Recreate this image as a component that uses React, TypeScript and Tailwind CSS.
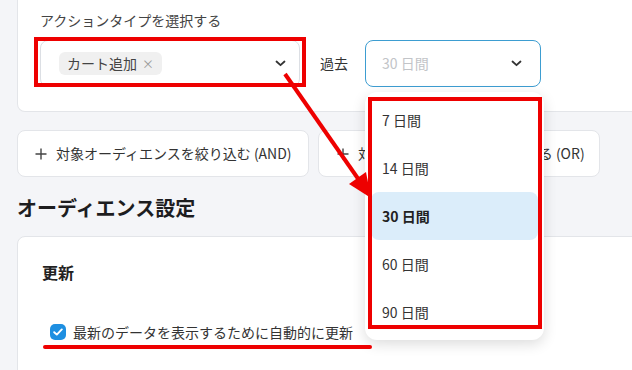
import React from "react";

const font = "font-['Noto_Sans_CJK_JP','Noto_Sans',sans-serif]";

function Chevron({ className = "" }: { className?: string }) {
  return (
    <svg width="11" height="7" viewBox="0 0 11 7" className={className}>
      <path d="M1.5 1.5 L5.5 5.2 L9.5 1.5" fill="none" stroke="#333" strokeWidth="1.8" strokeLinecap="round" strokeLinejoin="round" />
    </svg>
  );
}

function PlusIcon() {
  return (
    <svg width="12" height="12" viewBox="0 0 12 12" className="shrink-0">
      <path d="M6 0.5 V11.5 M0.5 6 H11.5" stroke="#444" strokeWidth="1.4" />
    </svg>
  );
}

const periods = ["7 日間", "14 日間", "30 日間", "60 日間", "90 日間"];

export default function App() {
  return (
    <div className={`relative w-[632px] h-[370px] overflow-hidden bg-[#f4f5f8] text-[#333] ${font}`}>
      <div className="pl-[17px]">
        {/* action type card */}
        <section className="w-[660px] h-[112px] bg-white border border-t-0 border-[#e3e5e9] rounded-bl-lg pl-[22px] pt-[10px]">
          <p className="text-[14px] leading-[20px] text-[#444]">アクションタイプを選択する</p>
          <div className="flex items-center mt-[10px]">
            <div className="w-[260px] h-[47px] border border-[#dcdfe4] rounded-lg flex items-center justify-between pl-[18px] pr-[13px]">
              <span className="flex items-center gap-[5px] bg-[#f0f0f0] rounded-[6px] h-[23px] px-[8px] text-[14px] text-[#444]">
                カート追加
                <span className="text-[12px] text-[#999] leading-none">×</span>
              </span>
              <Chevron />
            </div>
            <span className="ml-[20px] text-[14px] text-[#333]">過去</span>
            <div className="ml-[17px] w-[176px] h-[47px] border border-[#3d9dd1] rounded-lg flex items-center justify-between pl-[16px] pr-[18px]">
              <span className="text-[14px] text-[#c2c4c8]">30 日間</span>
              <Chevron />
            </div>
          </div>
        </section>

        {/* filter buttons */}
        <div className="flex gap-[9px] mt-[18px]">
          <button className="w-[292px] h-[47px] bg-white border border-[#e3e5e9] rounded-lg flex items-center gap-[9px] pl-[17px] text-[14px] text-[#333]">
            <PlusIcon />
            対象オーディエンスを絞り込む (AND)
          </button>
          <button className="w-[282px] h-[47px] bg-white border border-[#e3e5e9] rounded-lg flex items-center gap-[9px] pl-[18px] text-[14px] text-[#333]">
            <PlusIcon />
            対象オーディエンスを拡張する (OR)
          </button>
        </div>

        <h2 className="mt-[17px] text-[20px] leading-[28px] font-bold text-[#1d1d1f]">オーディエンス設定</h2>

        {/* update card */}
        <section className="mt-[14px] w-[660px] h-[200px] bg-white border border-[#e3e5e9] rounded-tl-lg pl-[24px] pt-[24px]">
          <h3 className="text-[16px] leading-[22px] font-bold text-[#222]">更新</h3>
          <label className="mt-[38px] ml-[8px] flex items-center gap-[7px] text-[14px] leading-[22px] text-[#333]">
            <span className="w-[16px] h-[16px] rounded-[5px] bg-[#1e8fe1] flex items-center justify-center">
              <svg width="10" height="8" viewBox="0 0 10 8">
                <path d="M1.2 4.2 L3.8 6.6 L8.8 1.4" fill="none" stroke="white" strokeWidth="1.9" strokeLinecap="round" strokeLinejoin="round" />
              </svg>
            </span>
            最新のデータを表示するために自動的に更新
          </label>
        </section>
      </div>

      {/* open dropdown */}
      <div className="absolute left-[365px] top-[92px] w-[179px] h-[248px] bg-white rounded-xl shadow-[0_4px_14px_rgba(0,0,0,0.14)] px-[6px] py-[4px]">
        {periods.map((p) => (
          <div
            key={p}
            className={
              p === "30 日間"
                ? "h-[48px] flex items-center pl-[11px] rounded-lg bg-[#dbedfa] text-[14px] font-bold text-[#222]"
                : "h-[48px] flex items-center pl-[11px] text-[14px] text-[#333]"
            }
          >
            {p}
          </div>
        ))}
      </div>

      {/* annotations */}
      <div className="absolute left-[34px] top-[37px] w-[272px] h-[50px] border-[4px] border-[#ee0000]" />
      <div className="absolute left-[368px] top-[97px] w-[174px] h-[232px] border-[4px] border-[#ee0000]" />
      <div className="absolute left-[43px] top-[345px] w-[329px] h-[4px] rounded-full bg-[#ee0000]" />
      <svg className="absolute left-0 top-0" width="632" height="370">
        <line x1="285" y1="74" x2="359" y2="180" stroke="#ee0000" strokeWidth="4" />
        <polygon points="371,198 349,184 366,172" fill="#ee0000" />
      </svg>
    </div>
  );
}
